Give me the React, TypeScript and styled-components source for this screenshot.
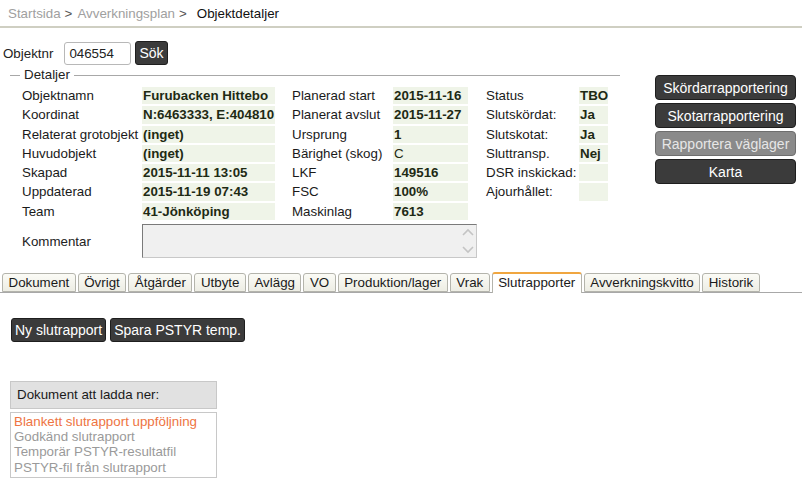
import React from 'react';
import styled, {createGlobalStyle} from 'styled-components';

const GlobalStyle = createGlobalStyle`
    html, body {
        margin: 0;
        padding: 0;
        background: #fff;
    }
    body {
        font-family: "Liberation Sans", Arial, sans-serif;
        font-size: 13.33px;
        color: #222;
    }
`;

type Field = {label: string; value: string; bold?: boolean};

const col1: Field[] = [
    {label: 'Objektnamn', value: 'Furubacken Hittebo', bold: true},
    {label: 'Koordinat', value: 'N:6463333, E:404810', bold: true},
    {label: 'Relaterat grotobjekt', value: '(inget)', bold: true},
    {label: 'Huvudobjekt', value: '(inget)', bold: true},
    {label: 'Skapad', value: '2015-11-11 13:05', bold: true},
    {label: 'Uppdaterad', value: '2015-11-19 07:43', bold: true},
    {label: 'Team', value: '41-Jönköping', bold: true},
];

const col2: Field[] = [
    {label: 'Planerad start', value: '2015-11-16', bold: true},
    {label: 'Planerat avslut', value: '2015-11-27', bold: true},
    {label: 'Ursprung', value: '1', bold: true},
    {label: 'Bärighet (skog)', value: 'C'},
    {label: 'LKF', value: '149516', bold: true},
    {label: 'FSC', value: '100%', bold: true},
    {label: 'Maskinlag', value: '7613', bold: true},
];

const col3: (Field | null)[] = [
    {label: 'Status', value: 'TBO', bold: true},
    {label: 'Slutskördat:', value: 'Ja', bold: true},
    {label: 'Slutskotat:', value: 'Ja', bold: true},
    {label: 'Sluttransp.', value: 'Nej', bold: true},
    {label: 'DSR inskickad:', value: ''},
    {label: 'Ajourhållet:', value: ''},
    null,
];

const tabs = ['Dokument', 'Övrigt', 'Åtgärder', 'Utbyte', 'Avlägg', 'VO', 'Produktion/lager', 'Vrak', 'Slutrapporter', 'Avverkningskvitto', 'Historik'];

const documents = [
    {name: 'Blankett slutrapport uppföljning', active: true},
    {name: 'Godkänd slutrapport'},
    {name: 'Temporär PSTYR-resultatfil'},
    {name: 'PSTYR-fil från slutrapport'},
];

const App = () => {
    return (
        <Page>
            <GlobalStyle/>
            <Breadcrumb>
                <Crumb>Startsida</Crumb>
                <Sep>&gt;</Sep>
                <Crumb>Avverkningsplan</Crumb>
                <Sep>&gt;</Sep>
                <Current>Objektdetaljer</Current>
            </Breadcrumb>

            <SearchRow>
                <span>Objektnr</span>
                <SearchInput defaultValue="046554"/>
                <DarkButton>Sök</DarkButton>
            </SearchRow>

            <Main>
                <Details>
                    <Legend>Detaljer</Legend>
                    <FieldGrid>
                        {col1.map((f, i) => (
                            <React.Fragment key={f.label}>
                                <Label>{f.label}</Label>
                                <Value $bold={f.bold}>{f.value}</Value>
                                <Spacer/>
                                <Label>{col2[i].label}</Label>
                                <Value $bold={col2[i].bold}>{col2[i].value}</Value>
                                <Spacer/>
                                {col3[i] ? (
                                    <>
                                        <Label>{col3[i]!.label}</Label>
                                        <Value $bold={col3[i]!.bold}>{col3[i]!.value}</Value>
                                    </>
                                ) : (
                                    <>
                                        <Spacer/>
                                        <Spacer/>
                                    </>
                                )}
                            </React.Fragment>
                        ))}
                    </FieldGrid>
                    <CommentRow>
                        <CommentLabel>Kommentar</CommentLabel>
                        <CommentBox>
                            <ScrollArrows>
                                <svg width="12" height="8" viewBox="0 0 12 8">
                                    <path d="M1 7 L6 2 L11 7" fill="none" stroke="#c4c4c4" strokeWidth="1.6"/>
                                </svg>
                                <svg width="12" height="8" viewBox="0 0 12 8">
                                    <path d="M1 1 L6 6 L11 1" fill="none" stroke="#c4c4c4" strokeWidth="1.6"/>
                                </svg>
                            </ScrollArrows>
                        </CommentBox>
                    </CommentRow>
                </Details>

                <SideButtons>
                    <SideButton>Skördarrapportering</SideButton>
                    <SideButton>Skotarrapportering</SideButton>
                    <SideButton $disabled>Rapportera väglager</SideButton>
                    <SideButton>Karta</SideButton>
                </SideButtons>
            </Main>

            <TabBar>
                {tabs.map(t => (
                    <Tab key={t} $active={t === 'Slutrapporter'}>{t}</Tab>
                ))}
            </TabBar>

            <TabContent>
                <ActionRow>
                    <ActionButton>Ny slutrapport</ActionButton>
                    <ActionButton>Spara PSTYR temp.</ActionButton>
                </ActionRow>

                <DocHeader>Dokument att ladda ner:</DocHeader>
                <DocList>
                    {documents.map(d => (
                        <DocItem key={d.name} $active={d.active}>{d.name}</DocItem>
                    ))}
                </DocList>
            </TabContent>
        </Page>
    );
};

const Page = styled.div`
    width: 802px;
`;

const Breadcrumb = styled.div`
    display: flex;
    align-items: center;
    gap: 4px;
    height: 26px;
    padding: 0 8px;
    border-bottom: 2px solid #cfcfc2;
`;

const Crumb = styled.span`
    color: #a0a0a0;
`;

const Sep = styled.span`
    color: #555;
    margin-right: 1px;
`;

const Current = styled.span`
    color: #111;
    margin-left: 5px;
`;

const SearchRow = styled.div`
    display: flex;
    align-items: center;
    gap: 4px;
    margin-top: 13px;
    padding-left: 3px;

    span {
        margin-right: 7px;
    }
`;

const SearchInput = styled.input`
    box-sizing: border-box;
    width: 67px;
    height: 23px;
    padding: 0 4px;
    font: inherit;
    color: #222;
    border: 1px solid #b8b8b8;
    border-radius: 3px;
`;

const DarkButton = styled.button`
    box-sizing: border-box;
    height: 24px;
    padding: 0 3px;
    font-family: inherit;
    font-size: 14px;
    color: #fff;
    background: #3b3b3b;
    border: 1px solid #1e1e1e;
    border-radius: 3px;
    cursor: pointer;
`;

const ActionButton = styled(DarkButton)`
    padding: 0 3px;
`;

const Main = styled.div`
    display: flex;
    align-items: flex-start;
    margin-top: 2px;
`;

const Details = styled.div`
    box-sizing: border-box;
    width: 610px;
    margin-left: 10px;
    margin-top: 8px;
    padding-left: 12px;
    border-top: 1px solid #a8a8a8;
`;

const Legend = styled.div`
    display: inline-block;
    margin: -9px 0 0 -2px;
    padding: 0 4px;
    background: #fff;
    line-height: 16px;
    vertical-align: top;
`;

const FieldGrid = styled.div`
    display: grid;
    grid-template-columns: 120px 133px 17px 101px 75px 18px 93px 29px;
    grid-auto-rows: 17.3px;
    row-gap: 2px;
    margin-top: -4px;
`;

const Label = styled.div`
    line-height: 17px;
    white-space: nowrap;
    color: #1a1a1a;
`;

const Value = styled.div<{$bold?: boolean}>`
    line-height: 17px;
    padding-left: 1px;
    white-space: nowrap;
    background: #eff4e8;
    color: #1e2a14;
    font-weight: ${p => (p.$bold ? 'bold' : 'normal')};
`;

const Spacer = styled.div``;

const CommentRow = styled.div`
    display: flex;
    align-items: center;
    margin-top: 4px;
`;

const CommentLabel = styled.div`
    width: 120px;
`;

const CommentBox = styled.div`
    box-sizing: border-box;
    width: 335px;
    height: 34px;
    display: flex;
    justify-content: flex-end;
    background: #f0f0f0;
    border: 1px solid #c8c8c8;
    border-top-color: #7a7a7a;
    border-left-color: #7a7a7a;
`;

const ScrollArrows = styled.div`
    display: flex;
    flex-direction: column;
    justify-content: space-between;
    align-items: center;
    width: 16px;
    padding: 3px 0;
`;

const SideButtons = styled.div`
    display: flex;
    flex-direction: column;
    gap: 3px;
    margin-left: 35px;
    margin-top: 8px;
`;

const SideButton = styled.button<{$disabled?: boolean}>`
    box-sizing: border-box;
    width: 141px;
    height: 25px;
    font-family: inherit;
    font-size: 14px;
    color: ${p => (p.$disabled ? '#e6e6e6' : '#fff')};
    background: ${p => (p.$disabled ? '#8a8a8a' : '#3b3b3b')};
    border: 1px solid ${p => (p.$disabled ? '#6e6e6e' : '#1e1e1e')};
    border-radius: 4px;
    padding: 0;
`;

const TabBar = styled.div`
    display: flex;
    align-items: flex-end;
    gap: 2px;
    height: 20px;
    margin-top: 14px;
    padding-left: 2px;
    border-bottom: 1px solid #a8a8a8;
`;

const Tab = styled.div<{$active?: boolean}>`
    box-sizing: border-box;
    height: ${p => (p.$active ? '21px' : '19px')};
    margin-bottom: ${p => (p.$active ? '-1px' : '0')};
    padding: 0 5.5px;
    line-height: 17px;
    color: #1a1a1a;
    background: ${p => (p.$active ? '#fff' : 'linear-gradient(#fbfbf6, #ededE4)')};
    border: 1px solid #b4b4ac;
    border-top: ${p => (p.$active ? '2px solid #f0a640' : '1px solid #b4b4ac')};
    border-bottom: ${p => (p.$active ? 'none' : '1px solid #b4b4ac')};
    border-radius: 3px 3px 0 0;
    white-space: nowrap;
`;

const TabContent = styled.div`
    padding: 0 10px;
`;

const ActionRow = styled.div`
    display: flex;
    gap: 4px;
    margin-top: 25px;
    padding-left: 1px;
`;

const DocHeader = styled.div`
    box-sizing: border-box;
    width: 207px;
    height: 28px;
    margin-top: 39px;
    padding-left: 6px;
    line-height: 26px;
    background: #e1e1e1;
    border: 1px solid #c8c8c8;
    color: #1a1a1a;
`;

const DocList = styled.div`
    box-sizing: border-box;
    width: 207px;
    margin-top: 3px;
    padding: 1px 3px 2px;
    border: 1px solid #c8c8c8;
`;

const DocItem = styled.div<{$active?: boolean}>`
    line-height: 15.2px;
    color: ${p => (p.$active ? '#ee7442' : '#9a9a9a')};
    white-space: nowrap;
`;

export default App;
